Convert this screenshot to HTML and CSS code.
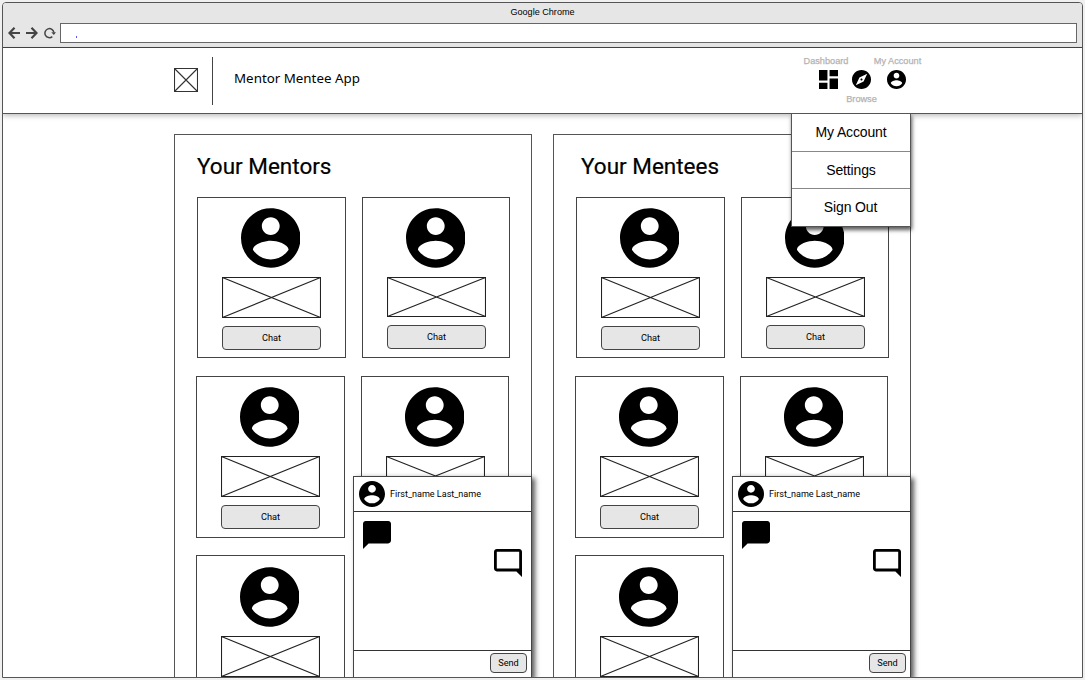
FILE: index.html
```html
<!DOCTYPE html>
<html lang="en">
<head>
<meta charset="utf-8">
<title>Mentor Mentee App</title>
<link rel="stylesheet" href="styles.css">
</head>
<body>
<svg class="defs" aria-hidden="true">
  <symbol id="account" viewBox="2 2 20 20"><path d="M12 2C6.48 2 2 6.48 2 12s4.480 10 10 10 10-4.480 10-10S17.520 2 12 2zm0 3c1.660 0 3 1.340 3 3s-1.340 3-3 3-3-1.340-3-3 1.340-3 3-3zm0 14.200c-2.500 0-4.710-1.280-6-3.220.03-1.990 4-3.080 6-3.080 1.990 0 5.970 1.090 6 3.080-1.290 1.940-3.500 3.220-6 3.220z"/></symbol>
  <symbol id="cross" viewBox="0 0 99 40" preserveAspectRatio="none"><path d="M.5.5h98v39H.5zM.5.5l98 39M.5 39.500l98-39" fill="none" stroke="#222" stroke-width="1.100"/></symbol>
  <symbol id="bubble" viewBox="2 2 20 20"><path d="M20 2H4c-1.100 0-2 .9-2 2v18l4-4h14c1.100 0 2-.9 2-2V4c0-1.100-.9-2-2-2z"/></symbol>
  <symbol id="bubble-outline" viewBox="2 2 20 20"><path d="M21.990 4c0-1.100-.89-2-1.990-2H4c-1.100 0-2 .9-2 2v12c0 1.100.9 2 2 2h14l4 4-.01-18zM20 16H4V4h16v12z"/></symbol>
</svg>
<div class="window">
  <div class="chrome">
    <div class="chrome-title">Google Chrome</div>
    <div class="toolbar">
      <svg class="arrow" viewBox="0 0 12 12"><path d="M6.500.8 1.500 6l5 5.200M1.800 6H12"/></svg>
      <svg class="arrow" viewBox="0 0 12 12"><path d="M5.500.8l5 5.200-5 5.200M10.200 6H0"/></svg>
      <svg class="reload" viewBox="0 0 12 12"><path d="M8.300 9.600A4.500 4.500 0 1 1 9.900 5.500" fill="none" stroke="#444" stroke-width="1.500"/><path d="M7.300 5.200h4.700L9.800 8z" fill="#444"/></svg>
      <div class="address"><i class="caret"></i></div>
    </div>
  </div>
  <header class="header">
    <svg class="logo" viewBox="0 0 24 24"><path d="M.5.5h23v23H.5zM.5.5l23 23M.5 23.500l23-23"/></svg>
    <div class="divider"></div>
    <div class="brand">Mentor Mentee App</div>
    <nav class="nav">
      <div class="nav-item dashboard"><span>Dashboard</span><svg viewBox="3 3 18 18"><path d="M3 13h8V3H3v10zm0 8h8v-6H3v6zm10 0h8V11h-8v10zm0-18v6h8V3h-8z"/></svg></div>
      <div class="nav-item browse"><svg viewBox="2 2 20 20"><path d="M12 10.900c-.61 0-1.100.49-1.100 1.100s.49 1.100 1.100 1.100 1.100-.49 1.100-1.100-.49-1.100-1.100-1.100zM12 2C6.480 2 2 6.480 2 12s4.480 10 10 10 10-4.480 10-10S17.520 2 12 2zm2.190 12.190L6 18l3.810-8.190L18 6l-3.810 8.190z"/></svg><span>Browse</span></div>
      <div class="nav-item account"><span>My Account</span><svg><use href="#account"/></svg></div>
    </nav>
    <div class="menu"><div>My Account</div><div>Settings</div><div>Sign Out</div></div>
  </header>
  <main class="main">
    <section class="panel">
      <h2 class="mentors">Your Mentors</h2>
      <div class="row first">
        <div class="card"><svg class="avatar"><use href="#account"/></svg><svg class="image"><use href="#cross"/></svg><button>Chat</button></div>
        <div class="card raised"><svg class="avatar"><use href="#account"/></svg><svg class="image"><use href="#cross"/></svg><button>Chat</button></div>
      </div>
      <div class="row">
        <div class="card"><svg class="avatar"><use href="#account"/></svg><svg class="image"><use href="#cross"/></svg><button>Chat</button></div>
        <div class="card raised"><svg class="avatar"><use href="#account"/></svg><svg class="image"><use href="#cross"/></svg></div>
      </div>
      <div class="row last">
        <div class="card"><svg class="avatar"><use href="#account"/></svg><svg class="image"><use href="#cross"/></svg></div>
      </div>
      <aside class="chat">
        <div class="chat-head"><svg><use href="#account"/></svg><span>First_name Last_name</span></div>
        <div class="chat-body"><svg class="received"><use href="#bubble"/></svg><svg class="sent"><use href="#bubble-outline"/></svg></div>
        <div class="chat-foot"><button>Send</button></div>
      </aside>
    </section>
    <section class="panel">
      <h2 class="mentees">Your Mentees</h2>
      <div class="row first">
        <div class="card"><svg class="avatar"><use href="#account"/></svg><svg class="image"><use href="#cross"/></svg><button>Chat</button></div>
        <div class="card raised"><svg class="avatar"><use href="#account"/></svg><svg class="image"><use href="#cross"/></svg><button>Chat</button></div>
      </div>
      <div class="row">
        <div class="card"><svg class="avatar"><use href="#account"/></svg><svg class="image"><use href="#cross"/></svg><button>Chat</button></div>
        <div class="card raised"><svg class="avatar"><use href="#account"/></svg><svg class="image"><use href="#cross"/></svg></div>
      </div>
      <div class="row last">
        <div class="card"><svg class="avatar"><use href="#account"/></svg><svg class="image"><use href="#cross"/></svg></div>
      </div>
      <aside class="chat">
        <div class="chat-head"><svg><use href="#account"/></svg><span>First_name Last_name</span></div>
        <div class="chat-body"><svg class="received"><use href="#bubble"/></svg><svg class="sent"><use href="#bubble-outline"/></svg></div>
        <div class="chat-foot"><button>Send</button></div>
      </aside>
    </section>
  </main>
</div>
</body>
</html>
```
FILE: styles.css
```css
* { box-sizing: border-box; }
body { margin: 0; padding: 2px; height: 680px; overflow: hidden; background: #f0f0f0; color: #000; font-family: Roboto, sans-serif; }
svg { display: block; }
.defs { position: absolute; width: 0; height: 0; }
.window { width: 1081px; height: 676px; border: 1px solid #555; border-radius: 4px 4px 0 0; background: #fff; overflow: hidden; display: flex; flex-direction: column; }

.chrome { flex: none; height: 45px; background: #e6e6e6; border-bottom: 1px solid #444; }
.chrome-title { height: 20px; text-align: center; font: 9.100px/18px "Liberation Sans", Arial, sans-serif; }
.toolbar { display: flex; align-items: center; padding: 0 5px; height: 20px; }
.arrow { width: 12px; height: 12px; margin-right: 6px; fill: none; stroke: #444; stroke-width: 2.200; }
.reload { width: 12px; height: 12px; margin-right: 4px; }
.address { flex: 1; height: 20px; border: 1px solid #666; background: #fff; padding: 12px 0 0 15px; }
.caret { display: block; width: 1px; height: 2px; background: #55f; }

.header { position: relative; z-index: 3; flex: none; height: 66px; border-bottom: 1px solid #555; background: #fff; box-shadow: 0 2px 5px rgba(0,0,0,.25); display: flex; align-items: flex-start; padding-left: 171px; }
.logo { width: 24px; height: 24px; margin-top: 20px; fill: none; stroke: #333; stroke-width: 1.100; }
.divider { width: 1px; height: 48px; margin: 9px 21px 0 14px; background: #444; }
.brand { width: 569px; margin-top: 20px; font: 13.350px/20px "Noto Sans", sans-serif; }
.nav { display: flex; padding-top: 7px; }
.nav-item { display: flex; flex-direction: column; align-items: center; color: #b3b3b3; font: 9.200px/12px "Liberation Sans", Arial, sans-serif; white-space: nowrap; -webkit-text-stroke: .25px #b3b3b3; }
.nav-item svg { width: 19px; height: 19px; fill: #000; margin: 3px 0 4px; }
.dashboard { width: 46px; }
.dashboard svg { margin-left: 5px; }
.browse { width: 25px; padding-top: 12px; }
.account { width: 47px; }
.account svg { margin-right: 2px; }
.menu { position: absolute; left: 788px; top: 65px; width: 120px; height: 114px; border: 1px solid #555; background: #fff; box-shadow: 1px 3px 4px rgba(0,0,0,.65); clip-path: inset(0 -8px -10px -8px); }
.menu div { height: 37.500px; font: 14px/37px "Liberation Sans", Arial, sans-serif; letter-spacing: -.15px; text-align: center; border-bottom: 1px solid #888; }
.menu div:last-child { border: 0; padding-right: 1px; }

.main { flex: 1; display: flex; gap: 21px; padding: 20px 0 0 171px; min-height: 0; }
.panel { position: relative; width: 358px; border: 1px solid #555; border-bottom: 0; height: 543px; }
.panel h2 { margin: 0; height: 62px; font-size: 22.500px; line-height: 62px; font-weight: 400; padding-left: 22px; -webkit-text-stroke: .2px #000; }
.panel .mentees { padding-left: 27px; }
.row { display: flex; gap: 16px; padding-left: 21px; margin-bottom: 17px; height: 162px; }
.row.first { padding-left: 22px; height: 161px; margin-bottom: 18px; }
.card { width: 149px; border: 1px solid #444; padding: 10px 0 0 24px; }
.card.raised { width: 148px; }
.avatar { width: 59.500px; height: 60px; margin-left: 18.500px; }
.image { width: 99px; height: 41px; margin-top: 9px; }
.raised .image { height: 40px; }
.last .card { padding-top: 11px; }
button { display: block; border: 1px solid #444; border-radius: 4px; background: #e6e6e6; color: #000; padding: 0; font: 9.200px/22px Roboto, sans-serif; text-align: center; }
.card button { width: 99px; height: 24px; margin-top: 8px; }

.chat { position: absolute; right: -1px; bottom: -1px; width: 179px; height: 202px; background: #fff; border: 1px solid #444; box-shadow: 3px 2px 5px rgba(0,0,0,.65); display: flex; flex-direction: column; }
.chat-head { height: 35px; border-bottom: 1px solid #333; display: flex; align-items: center; gap: 5px; padding-left: 5px; font-size: 9.050px; }
.chat-head span { line-height: 12px; padding-bottom: 1px; }
.chat-head svg { width: 26px; height: 26px; }
.chat-body { flex: 1; display: flex; justify-content: space-between; padding: 9px 9px 0 8.500px; }
.chat-body svg { width: 28px; height: 28px; }
.chat-body .sent { margin-top: 28px; }
.chat-foot { height: 27px; border-top: 1px solid #333; display: flex; justify-content: flex-end; padding: 2px 4px 0 0; }
.chat-foot button { width: 37px; height: 20px; line-height: 18px; }
```
